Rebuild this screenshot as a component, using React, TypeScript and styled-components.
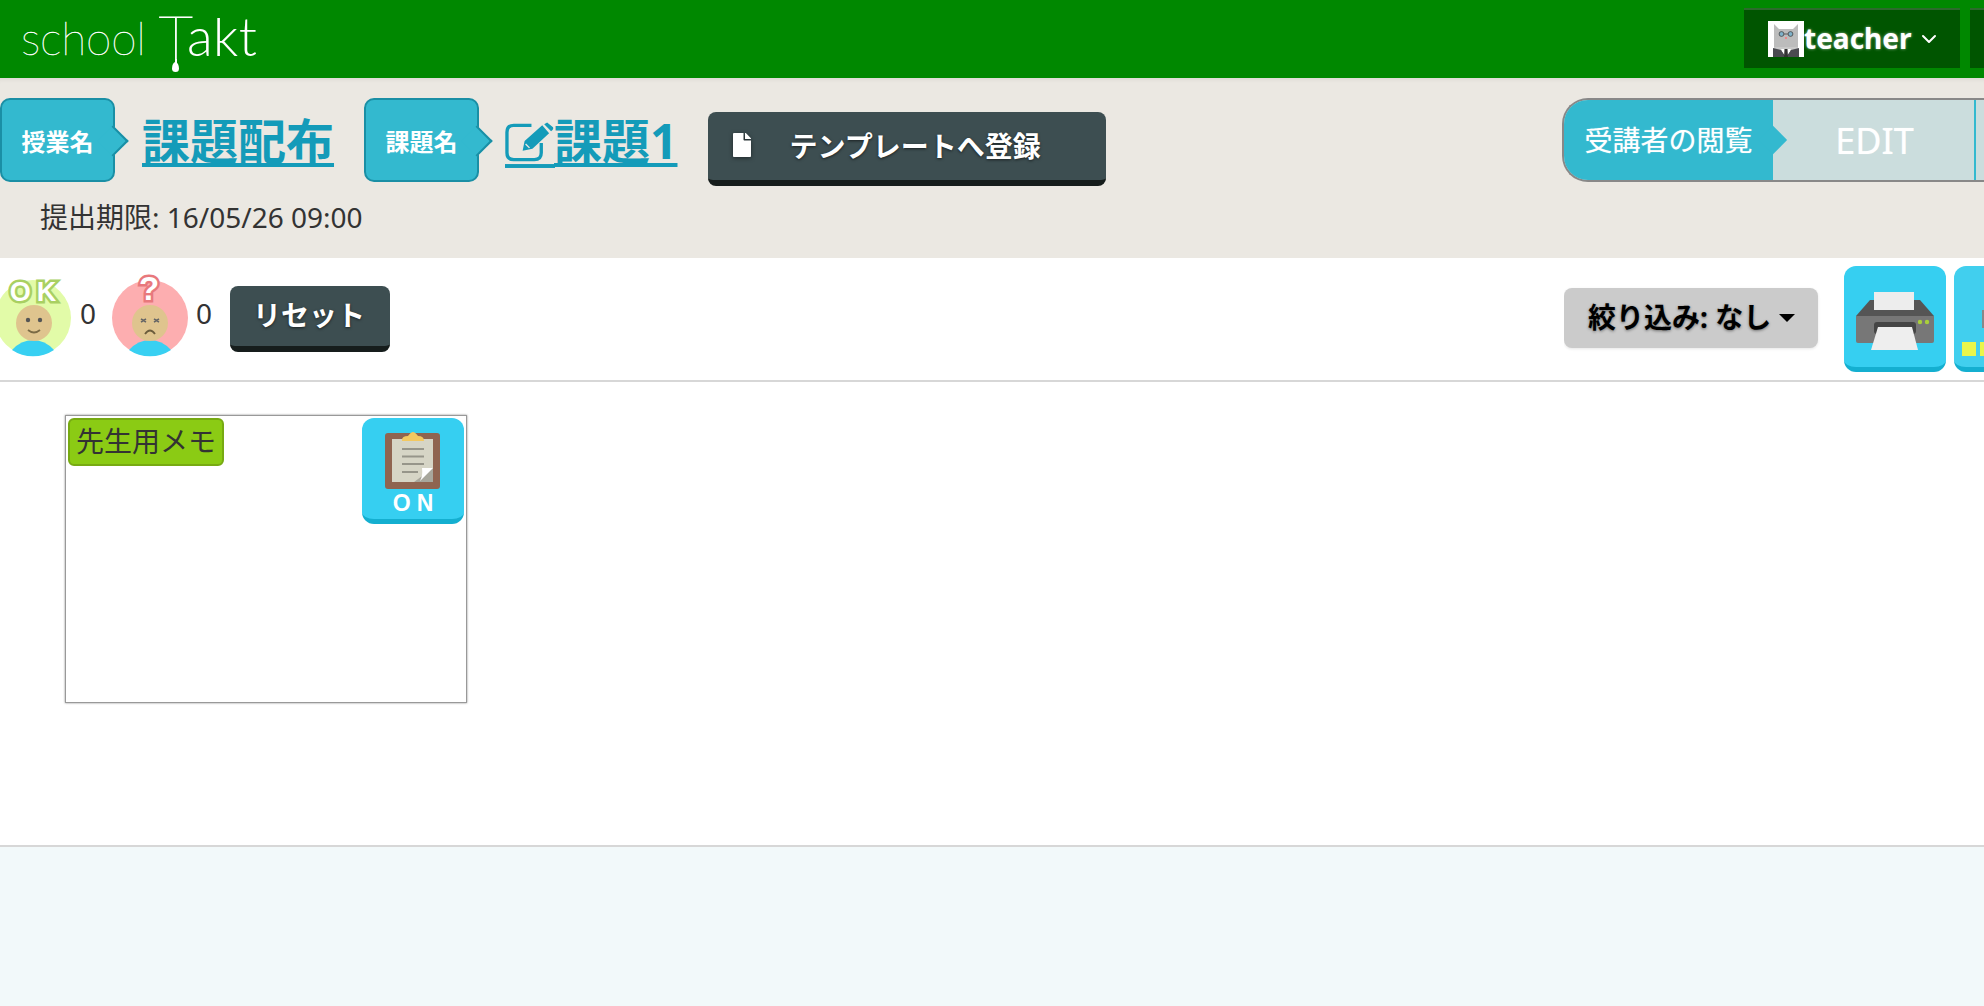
import styled, { createGlobalStyle } from "styled-components";
import { FaFile } from "react-icons/fa";
import { FiChevronDown } from "react-icons/fi";

const SANS = `"Noto Sans", "Noto Sans CJK JP", sans-serif`;

const GlobalStyle = createGlobalStyle`
  html, body {
    margin: 0;
    padding: 0;
    height: 100%;
    overflow: hidden;
    background: #fff;
  }
  #root {
    height: 100%;
  }
  * {
    box-sizing: border-box;
  }
`;

const Page = styled.div`
  width: 1984px;
  height: 1006px;
  display: flex;
  flex-direction: column;
  overflow: hidden;
  font-family: ${SANS};
  color: #333;
`;

const Header = styled.header`
  height: 78px;
  flex: none;
  background: #008800;
  display: flex;
  align-items: flex-start;
`;

const Logo = styled.div`
  display: flex;
  align-items: flex-start;
  height: 78px;
  padding-left: 21px;
  color: #fff;
  font-family: Lato, sans-serif;
  line-height: 78px;
`;

const LogoSchool = styled.span`
  font-size: 46px;
  font-weight: 100;
  letter-spacing: -0.2px;
  margin: -1px 13px 0 0;
  -webkit-text-stroke: 0.4px #fff;
`;

const LogoT = styled.span`
  position: relative;
  margin-top: -3px;
  font-size: 60px;
  font-weight: 100;
  letter-spacing: -6px;
  -webkit-text-stroke: 0.9px #fff;

  &::before {
    content: "";
    position: absolute;
    left: 16px;
    top: 62px;
    width: 2px;
    height: 6px;
    background: #fff;
  }

  &::after {
    content: "";
    position: absolute;
    left: 13.5px;
    top: 65px;
    width: 7px;
    height: 10px;
    background: #fff;
    border-radius: 50% 50% 50% 50% / 65% 65% 35% 35%;
  }
`;

const LogoAkt = styled.span`
  margin-top: -3px;
  font-size: 53px;
  font-weight: 300;
  letter-spacing: 0.5px;
`;

const UserArea = styled.div`
  margin-left: auto;
  width: 240px;
  flex: none;
  display: flex;
  gap: 10px;
  padding-top: 8px;
  overflow: hidden;
`;

const UserButton = styled.div`
  width: 216px;
  height: 60px;
  flex: none;
  background: #005500;
  border-top: 2px solid #2b6b2b;
  display: flex;
  align-items: center;
  padding: 0 0 0 24px;
  color: #fff;
`;

const Avatar = styled.svg`
  width: 36px;
  height: 36px;
  flex: none;
`;

const UserName = styled.span`
  font-size: 28px;
  font-weight: 700;
  line-height: 1;
  text-shadow: 0 0 3px rgba(255, 255, 255, 0.6);
  margin: -2px 5px 0 0;
`;

const HeaderStub = styled.div`
  width: 40px;
  height: 60px;
  flex: none;
  background: #005500;
  border-top: 2px solid #2b6b2b;
`;

const InfoBand = styled.section`
  height: 180px;
  flex: none;
  background: #ebe8e2;
  box-shadow: inset 0 5px 5px -4px rgba(0, 0, 0, 0.08);
  padding-top: 20px;
`;

const InfoRow = styled.div`
  display: flex;
  align-items: center;
  height: 84px;
`;

const Tag = styled.div<{ $gap?: number }>`
  position: relative;
  width: 115px;
  height: 84px;
  flex: none;
  margin-left: ${(p) => p.$gap ?? 0}px;
  background: #33b9cf;
  border: 2px solid #1a8fa5;
  border-radius: 10px;
  color: #fff;
  font-size: 24px;
  font-weight: 700;
  display: flex;
  align-items: center;
  justify-content: center;

  &::after {
    content: "";
    position: absolute;
    top: 50%;
    right: -11px;
    width: 20px;
    height: 20px;
    margin-top: -10px;
    background: #33b9cf;
    border-top: 2px solid #1a8fa5;
    border-right: 2px solid #1a8fa5;
    transform: rotate(45deg);
  }
`;

const TitleLink = styled.a<{ $gap: number }>`
  display: inline-block;
  margin: 2px 0 0 ${(p) => p.$gap}px;
  color: #149bb9;
  font-size: 48px;
  font-weight: 700;
  line-height: 56px;
  text-decoration: underline;
  text-decoration-thickness: 4px;
  text-underline-offset: 4px;
  white-space: nowrap;
`;

const EditIcon = styled.svg`
  display: inline;
  width: 49px;
  height: 40px;
  vertical-align: -3px;
  overflow: visible;
`;

const TemplateButton = styled.button`
  align-self: flex-start;
  margin: 14px 0 0 31px;
  width: 398px;
  height: 74px;
  flex: none;
  padding: 0 0 2px 24px;
  background: #3d4e51;
  border: 0;
  border-bottom: 6px solid #161d1c;
  border-radius: 8px;
  color: #fff;
  font-family: ${SANS};
  font-size: 28px;
  font-weight: 700;
  text-shadow: 0 1px 3px rgba(0, 0, 0, 0.6);
  display: flex;
  align-items: center;

  svg {
    width: 20px;
    height: 24px;
    margin-right: 37px;
    filter: drop-shadow(0 1px 2px rgba(0, 0, 0, 0.5));
  }
`;

const ViewSwitch = styled.div`
  margin-left: auto;
  width: 422px;
  height: 84px;
  flex: none;
  display: flex;
  border: 2px solid #888;
  border-right: 0;
  border-radius: 26px 0 0 26px;
  background: #cbdddd;
`;

const ViewLabel = styled.div`
  position: relative;
  width: 209px;
  flex: none;
  background: #33b9cf;
  border-radius: 24px 0 0 24px;
  color: #fff;
  font-size: 28px;
  text-shadow: 0 0 1px rgba(255, 255, 255, 0.6);
  display: flex;
  align-items: center;
  justify-content: center;
  padding-bottom: 2px;

  &::after {
    content: "";
    position: absolute;
    top: 50%;
    right: -10px;
    width: 20px;
    height: 20px;
    margin-top: -10px;
    background: #33b9cf;
    transform: rotate(45deg);
  }
`;

const ViewCell = styled.div`
  width: 203px;
  flex: none;
  color: #fff;
  font-size: 36px;
  text-shadow: 0 0 1px rgba(255, 255, 255, 0.6);
  display: flex;
  align-items: center;
  justify-content: center;
  padding-left: 2px;
  border-right: 2px solid #33b9cf;
`;

const Deadline = styled.div`
  margin: 13px 0 0 40px;
  font-size: 28px;
  line-height: 44px;
`;

const Toolbar = styled.section`
  height: 124px;
  flex: none;
  background: #fff;
  border-bottom: 2px solid #d7d7d7;
  display: flex;
  align-items: center;
`;

const ReactionIcon = styled.svg<{ $first?: boolean }>`
  width: 84px;
  height: 84px;
  flex: none;
  margin-left: ${(p) => (p.$first ? "-9px" : "0")};
  margin-top: -6px;
  overflow: visible;
`;

const Count = styled.span<{ $left: number; $right: number }>`
  font-size: 28px;
  line-height: 1;
  width: 16px;
  margin: -12px ${(p) => p.$right}px 0 ${(p) => p.$left}px;
  flex: none;
`;

const ResetButton = styled.button`
  width: 160px;
  height: 66px;
  flex: none;
  background: #3d4e51;
  border: 0;
  border-bottom: 6px solid #161d1c;
  border-radius: 8px;
  color: #fff;
  font-family: ${SANS};
  font-size: 28px;
  font-weight: 700;
  text-shadow: 0 1px 3px rgba(0, 0, 0, 0.6);
  padding: 0 2px 4px 0;
`;

const ToolbarRight = styled.div`
  margin-left: auto;
  width: 420px;
  flex: none;
  display: flex;
  align-items: flex-start;
  overflow: hidden;
`;

const FilterButton = styled.button`
  width: 254px;
  height: 60px;
  flex: none;
  margin-top: 22px;
  padding: 0 0 4px 24px;
  background: #cbcbcb;
  border: 0;
  border-radius: 8px;
  box-shadow: 0 1px 3px rgba(0, 0, 0, 0.1);
  color: #000;
  font-family: ${SANS};
  font-size: 28px;
  font-weight: 700;
  text-shadow: 0 1px 3px rgba(0, 0, 0, 0.45);
  display: flex;
  align-items: center;
`;

const Caret = styled.span`
  width: 0;
  height: 0;
  margin: 4px 0 0 8px;
  border-left: 8px solid transparent;
  border-right: 8px solid transparent;
  border-top: 8px solid #000;
`;

const SquareButton = styled.div<{ $tone?: string }>`
  width: 102px;
  height: 106px;
  flex: none;
  background: ${(p) => p.$tone ?? "#36cff1"};
  border-bottom: 5px solid #14afd0;
  border-radius: 12px;
  display: flex;
  overflow: hidden;

  svg {
    width: 100%;
    height: 100%;
    display: block;
  }
`;

const PrintButton = styled(SquareButton)`
  margin-left: 26px;
`;

const NextButton = styled(SquareButton)`
  margin-left: 8px;
`;

const Main = styled.main`
  height: 465px;
  flex: none;
  background: #fff;
  border-bottom: 2px solid #d7d7d7;
  padding: 33px 0 0 65px;
`;

const MemoCard = styled.div`
  width: 402px;
  height: 288px;
  padding: 2px;
  border: 1px solid #999;
  box-shadow: 0 0 2px rgba(0, 0, 0, 0.45);
  background: #fff;
  display: flex;
  justify-content: space-between;
  align-items: flex-start;
`;

const MemoTag = styled.div`
  width: 156px;
  height: 48px;
  background: #8bcb14;
  border: 2px solid #77aa12;
  border-radius: 6px;
  color: #333;
  font-size: 28px;
  line-height: 42px;
  text-align: center;
  white-space: nowrap;
`;

const Footer = styled.footer`
  flex: 1;
  background: #f2f9fa;
`;

const HappyFace = () => (
  <ReactionIcon $first viewBox="0 0 84 84">
    <circle cx="42" cy="44" r="38" fill="#e2fba8" />
    <path d="M21 76 Q30 66 42 66 Q54 66 63 76 A38 38 0 0 1 21 76 Z" fill="#38d0f2" />
    <circle cx="43" cy="49" r="18" fill="#dfc48e" />
    <circle cx="37" cy="46" r="2.2" fill="#555" />
    <circle cx="49" cy="46" r="2.2" fill="#555" />
    <path d="M37 56 Q43 61 49 56" fill="none" stroke="#7a6a45" strokeWidth="1.8" />
    <text
      x="45"
      y="27"
      textAnchor="middle"
      fontFamily="Liberation Sans, sans-serif"
      fontWeight="700"
      fontSize="27"
      letterSpacing="6"
      fill="#fff"
      stroke="#a9d062"
      strokeWidth="5"
      paintOrder="stroke"
    >
      OK
    </text>
  </ReactionIcon>
);

const SadFace = () => (
  <ReactionIcon viewBox="0 0 84 84">
    <circle cx="42" cy="44" r="38" fill="#fdaeb0" />
    <path d="M21 76 Q30 66 42 66 Q54 66 63 76 A38 38 0 0 1 21 76 Z" fill="#38d0f2" />
    <circle cx="42" cy="49" r="18" fill="#dfc48e" />
    <path
      d="M33 45 l5 3 M38 45 l-5 3 M46 45 l5 3 M51 45 l-5 3"
      stroke="#666"
      strokeWidth="1.6"
    />
    <path d="M37 60 Q42 53 47 60" fill="none" stroke="#6b5c3c" strokeWidth="1.8" />
    <text
      x="41"
      y="26"
      textAnchor="middle"
      fontFamily="Liberation Sans, sans-serif"
      fontWeight="700"
      fontSize="33"
      fill="#fff"
      stroke="#e8787c"
      strokeWidth="5"
      paintOrder="stroke"
    >
      ?
    </text>
  </ReactionIcon>
);

const CatAvatar = () => (
  <Avatar viewBox="0 0 36 36">
    <rect width="36" height="36" fill="#fff" />
    <path d="M6 28 V3 L11 8 H25 L30 3 V28 Z" fill="#bcbcbc" />
    <rect x="6" y="26" width="24" height="4" fill="#c9c9c9" />
    <path d="M5 36 V27 L13 29 L18 36 L23 29 L31 27 V36 Z" fill="#4a4a50" />
    <path d="M13 28 H23 L18 36 Z" fill="#fff" />
    <path d="M16.5 28 H19.5 L20 36 H16 Z" fill="#333" />
    <circle cx="13.5" cy="13" r="2.4" fill="#7fb2c9" stroke="#444" strokeWidth="0.8" />
    <circle cx="22.5" cy="13" r="2.4" fill="#7fb2c9" stroke="#444" strokeWidth="0.8" />
    <path d="M16 13 H20" stroke="#444" strokeWidth="0.8" />
    <rect x="17" y="16" width="2" height="2" fill="#e88" />
  </Avatar>
);

// the underline runs on under the icon, the svg draws that part itself
const PencilBox = () => (
  <EditIcon viewBox="0 0 50 40">
    <path
      d="M27 3 H9 Q2 3 2 10 V31 Q2 38 9 38 H30 Q37 38 37 31 V21"
      fill="none"
      stroke="currentColor"
      strokeWidth="3.4"
    />
    <path
      d="M18 29 L20 19 L38 3 L45 11 L28 27 Z M40 2 L43 0 L49 5 Q50 7 47 9 Z"
      fill="currentColor"
    />
    <path d="M21 22 L25 26" stroke="#ebe8e2" strokeWidth="1.4" />
    <rect x="0" y="42.5" width="51" height="4" fill="currentColor" />
  </EditIcon>
);

const PrinterIcon = () => (
  <svg viewBox="0 0 102 101">
    <path d="M26 34 H76 L90 50 H12 Z" fill="#555" />
    <rect x="30" y="26" width="40" height="18" fill="#ededed" />
    <path d="M12 50 H90 V75 Q90 77 88 77 H14 Q12 77 12 75 Z" fill="#777" />
    <rect x="30" y="56" width="42" height="12" rx="3" fill="#454545" />
    <path d="M34 61 H68 L74 84 H27 Z" fill="#eee" />
    <circle cx="76" cy="56" r="2.2" fill="#a9cf3a" />
    <circle cx="83" cy="56" r="2.2" fill="#a9cf3a" />
  </svg>
);

const ClipboardIcon = () => (
  <svg viewBox="0 0 102 101">
    <rect x="23" y="15" width="55" height="56" rx="3" fill="#8f6450" />
    <rect x="30" y="21" width="41" height="43" fill="#d6d5c6" />
    <path d="M40 22 Q40 18 46 18 Q49 14 51 14 Q53 14 56 18 Q62 18 62 23 H40 Z" fill="#f3c860" />
    <path d="M40 31 H62 M40 38.5 H62 M40 46 H62 M40 54 H56" stroke="#96958a" strokeWidth="2.2" />
    <path d="M71 50 L52 64 H71 Z" fill="#a8a79c" />
    <path d="M71 50 L60 50 Q61 58 58 63 Z" fill="#fff" />
    <text
      x="54"
      y="93"
      textAnchor="middle"
      fontFamily="Liberation Sans, sans-serif"
      fontWeight="700"
      fontSize="23"
      letterSpacing="6"
      fill="#fff"
    >
      ON
    </text>
  </svg>
);

const StubIcon = () => (
  <svg viewBox="0 0 102 101">
    <rect x="8" y="76" width="14" height="14" fill="#e9f64a" />
    <rect x="26" y="76" width="14" height="14" fill="#e9f64a" />
    <rect x="28" y="44" width="3" height="18" fill="#888" />
  </svg>
);

export default function App() {
  return (
    <Page>
      <GlobalStyle />
      <Header>
        <Logo>
          <LogoSchool>school</LogoSchool>
          <LogoT>T</LogoT>
          <LogoAkt>akt</LogoAkt>
        </Logo>
        <UserArea>
          <UserButton>
            <CatAvatar />
            <UserName>teacher</UserName>
            <FiChevronDown size={24} />
          </UserButton>
          <HeaderStub />
        </UserArea>
      </Header>

      <InfoBand>
        <InfoRow>
          <Tag>授業名</Tag>
          <TitleLink $gap={27}>課題配布</TitleLink>
          <Tag $gap={30}>課題名</Tag>
          <TitleLink $gap={26}>
            <PencilBox />
            課題1
          </TitleLink>
          <TemplateButton>
            <FaFile />
            テンプレートへ登録
          </TemplateButton>
          <ViewSwitch>
            <ViewLabel>受講者の閲覧</ViewLabel>
            <ViewCell>EDIT</ViewCell>
          </ViewSwitch>
        </InfoRow>
        <Deadline>提出期限: 16/05/26 09:00</Deadline>
      </InfoBand>

      <Toolbar>
        <HappyFace />
        <Count $left={5} $right={12}>0</Count>
        <SadFace />
        <Count $left={4} $right={18}>0</Count>
        <ResetButton>リセット</ResetButton>
        <ToolbarRight>
          <FilterButton>
            絞り込み: なし
            <Caret />
          </FilterButton>
          <PrintButton>
            <PrinterIcon />
          </PrintButton>
          <NextButton $tone="#41cfee">
            <StubIcon />
          </NextButton>
        </ToolbarRight>
      </Toolbar>

      <Main>
        <MemoCard>
          <MemoTag>先生用メモ</MemoTag>
          <SquareButton>
            <ClipboardIcon />
          </SquareButton>
        </MemoCard>
      </Main>
      <Footer />
    </Page>
  );
}
